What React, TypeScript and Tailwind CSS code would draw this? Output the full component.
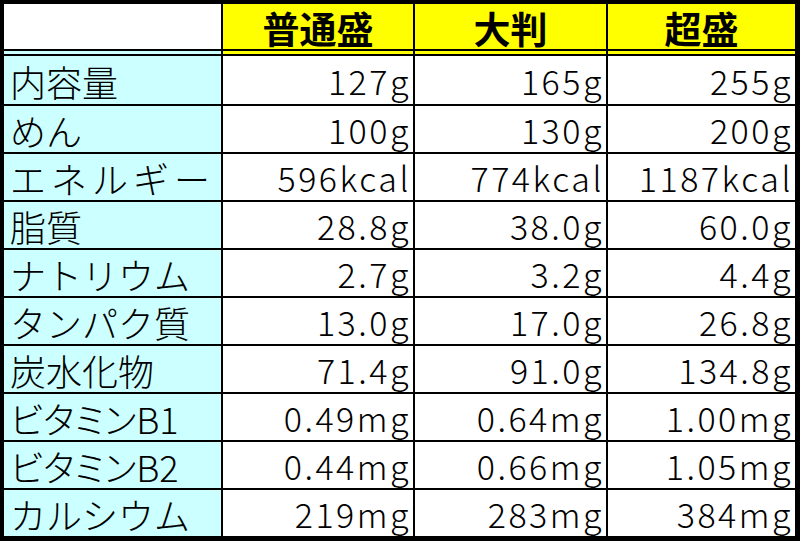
const HEADERS = ["普通盛", "大判", "超盛"];

// label, values, extra class for the label (spacing differs a little per row in the sheet)
const ROWS: { label: string; vals: string[]; lc?: string }[] = [
  { label: "内容量", vals: ["127g", "165g", "255g"] },
  { label: "めん", vals: ["100g", "130g", "200g"] },
  { label: "エネルギー", vals: ["596kcal", "774kcal", "1187kcal"], lc: "tracking-[5px]" },
  { label: "脂質", vals: ["28.8g", "38.0g", "60.0g"] },
  { label: "ナトリウム", vals: ["2.7g", "3.2g", "4.4g"] },
  { label: "タンパク質", vals: ["13.0g", "17.0g", "26.8g"] },
  { label: "炭水化物", vals: ["71.4g", "91.0g", "134.8g"] },
  { label: "ビタミンB1", vals: ["0.49mg", "0.64mg", "1.00mg"], lc: "[font-feature-settings:'palt']" },
  { label: "ビタミンB2", vals: ["0.44mg", "0.66mg", "1.05mg"], lc: "[font-feature-settings:'palt']" },
  { label: "カルシウム", vals: ["219mg", "283mg", "384mg"] },
];

const font = { fontFamily: '"Noto Sans CJK JP", "Noto Sans", sans-serif' };

export default function App() {
  return (
    <div
      className="w-[800px] h-[541px] bg-black pt-[4px] pl-[4px] pr-[5px] pb-[5px] grid grid-cols-[217px_190px_191px_187px] grid-rows-[45px_3px_48px_repeat(9,46px)] gap-[2px] text-black"
      style={font}
    >
      {/* header row */}
      <div className="bg-white" />
      {HEADERS.map((h) => (
        <div
          key={h}
          className="bg-[#ffff00] flex items-end justify-center text-[37px] font-bold leading-none pb-[2px]"
        >
          {h}
        </div>
      ))}

      {/* double line strip */}
      <div className="bg-[#ccffff]" />
      <div className="bg-[#ffff00]" />
      <div className="bg-[#ffff00]" />
      <div className="bg-[#ffff00]" />

      {ROWS.map((r) => (
        <div key={r.label} className="contents">
          <div
            className={`bg-[#ccffff] flex items-center pl-[6px] pt-[2px] text-[36px] font-light leading-none whitespace-nowrap ${r.lc ?? ""}`}
          >
            {r.label}
          </div>
          {r.vals.map((v, i) => (
            <div
              key={i}
              className="bg-white flex items-center justify-end pr-[2px] pt-[2px] text-[34px] font-light tracking-[2.5px] leading-none whitespace-nowrap"
            >
              {v}
            </div>
          ))}
        </div>
      ))}
    </div>
  );
}
